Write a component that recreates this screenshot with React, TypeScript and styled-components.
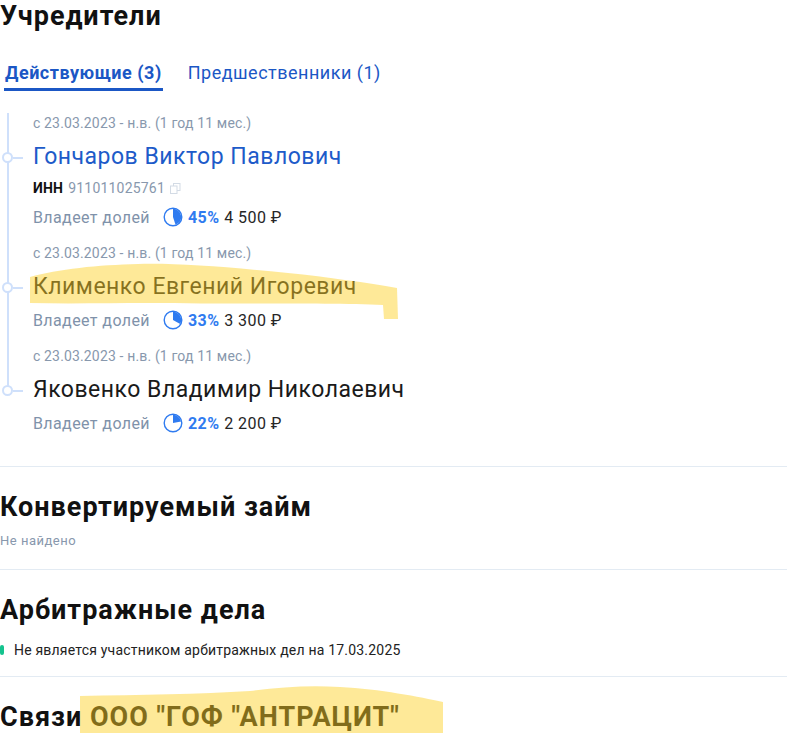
import styled, { createGlobalStyle } from "styled-components";

const GlobalStyle = createGlobalStyle`
  html, body {
    margin: 0;
    padding: 0;
    background: #fff;
  }
  body {
    font-family: Roboto, "Noto Sans", Arial, sans-serif;
    color: #1f1f1f;
  }
`;

const Page = styled.main`
  width: 787px;
  height: 736px;
  overflow: hidden;
  display: flex;
  flex-direction: column;
`;

const Section = styled.section<{ $first?: boolean; $bottom?: number }>`
  display: flex;
  flex-direction: column;
  padding: ${(p) => (p.$first ? "0 0 28px" : `24px 0 ${p.$bottom ?? 20}px`)};
  border-top: ${(p) => (p.$first ? "none" : "1px solid #e3ebf3")};
`;

const Heading = styled.h2`
  position: relative;
  margin: 0;
  font-size: 27px;
  line-height: 32px;
  font-weight: 700;
  color: #111;
  letter-spacing: 1px;
`;

const Tabs = styled.nav`
  display: flex;
  gap: 24px;
  margin-top: 30px;
  padding-left: 4px;
`;

const Tab = styled.span<{ $active?: boolean }>`
  font-size: 18px;
  line-height: 22px;
  letter-spacing: 0.5px;
  padding: 0 1px 4px;
  color: #1b57c5;
  font-weight: ${(p) => (p.$active ? 700 : 400)};
  border-bottom: 3px solid ${(p) => (p.$active ? "#1b57c5" : "transparent")};
`;

const Timeline = styled.div`
  position: relative;
  display: flex;
  flex-direction: column;
  gap: 12px;
  margin-top: 23px;
  padding-left: 33px;

  &::before {
    content: "";
    position: absolute;
    left: 7px;
    top: -1px;
    bottom: 48px;
    width: 2px;
    background: #cfe0fb;
  }
`;

const Item = styled.div`
  display: flex;
  flex-direction: column;
`;

const Period = styled.div`
  font-size: 14px;
  line-height: 18px;
  letter-spacing: 0.15px;
  color: #8898ad;
`;

const Name = styled.div<{ $link?: boolean }>`
  position: relative;
  margin-top: 9px;
  font-size: 23px;
  line-height: 32px;
  letter-spacing: 0.5px;
  color: ${(p) => (p.$link ? "#1d5bc9" : "#1a1a1a")};

  &::before {
    content: "";
    position: absolute;
    left: -31px;
    top: 11px;
    width: 7px;
    height: 7px;
    border: 2px solid #cfe0fb;
    border-radius: 50%;
    background: #fff;
  }

  &::after {
    content: "";
    position: absolute;
    left: -20px;
    top: 16px;
    width: 10px;
    height: 1.5px;
    background: #cfe0fb;
  }
`;

const InnRow = styled.div`
  display: flex;
  align-items: center;
  gap: 5px;
  margin-top: 3px;
  height: 24px;
  font-size: 14px;
  letter-spacing: 0.2px;
`;

const InnLabel = styled.b`
  color: #111;
  font-weight: 700;
`;

const InnValue = styled.span`
  color: #8898ad;
`;

const ShareRow = styled.div`
  display: flex;
  align-items: center;
  margin-top: 2px;
  height: 30px;
  font-size: 16px;
  letter-spacing: 0.4px;
`;

const ShareLabel = styled.span`
  color: #7f92aa;
  margin-right: 13px;
`;

const Percent = styled.b`
  color: #2f7bf0;
  font-weight: 700;
  margin: 0 5px;
`;

const Amount = styled.span`
  color: #262626;
`;

const Muted = styled.div`
  margin-top: 10px;
  font-size: 13px;
  line-height: 16px;
  letter-spacing: 0.5px;
  color: #8898ad;
`;

const Status = styled.div`
  display: flex;
  align-items: center;
  gap: 10px;
  margin-top: 16px;
  font-size: 14px;
  line-height: 16px;
  letter-spacing: 0.2px;
  color: #222;

  &::before {
    content: "";
    width: 4px;
    height: 10px;
    border-radius: 2px;
    background: #14c38e;
  }
`;

const Marker = styled.svg`
  position: absolute;
  pointer-events: none;
`;

const markFill = "rgba(252, 210, 40, 0.48)";

const Pie = ({ pct }: { pct: number }) => {
  const a = (pct / 100) * Math.PI * 2;
  const r = 8.2;
  const x = 10 + r * Math.sin(a);
  const y = 10 - r * Math.cos(a);
  const large = pct > 50 ? 1 : 0;
  return (
    <svg width="20" height="20" viewBox="0 0 20 20">
      <circle cx="10" cy="10" r="8.8" fill="none" stroke="#2f7bf0" strokeWidth="1.4" />
      <path d={`M10 10 L10 ${10 - r} A${r} ${r} 0 ${large} 1 ${x} ${y} Z`} fill="#2f7bf0" />
    </svg>
  );
};

const CopyIcon = () => (
  <svg width="11" height="11" viewBox="0 0 11 11">
    <rect x="3.5" y="0.5" width="6.5" height="7" fill="none" stroke="#d3dbe5" />
    <rect x="0.5" y="3" width="6.5" height="7.5" fill="#fff" stroke="#d3dbe5" />
  </svg>
);

const founders = [
  { name: "Гончаров Виктор Павлович", inn: "911011025761", pct: 45, amount: "4 500 ₽", link: true },
  { name: "Клименко Евгений Игоревич", pct: 33, amount: "3 300 ₽", marked: true },
  { name: "Яковенко Владимир Николаевич", pct: 22, amount: "2 200 ₽" },
];

function App() {
  return (
    <>
      <GlobalStyle />
      <Page>
        <Section $first>
          <Heading>Учредители</Heading>
          <Tabs>
            <Tab $active>Действующие (3)</Tab>
            <Tab>Предшественники (1)</Tab>
          </Tabs>
          <Timeline>
            {founders.map((f) => (
              <Item key={f.name}>
                <Period>с 23.03.2023 - н.в. (1 год 11 мес.)</Period>
                <Name $link={f.link}>
                  {f.name}
                  {f.marked ? (
                    <Marker width="372" height="60" viewBox="0 0 372 60" style={{ left: -5, top: -10 }}>
                      <path
                        d="M2 16 C30 8 70 4 110 3 C150 2 200 6 260 12 C300 16 340 22 369 27 L370 58 L356 58 L355 44 C300 42 200 43 120 42 C80 42 40 43 2 42 Z"
                        fill={markFill}
                      />
                    </Marker>
                  ) : null}
                </Name>
                {f.inn ? (
                  <InnRow>
                    <InnLabel>ИНН</InnLabel>
                    <InnValue>{f.inn}</InnValue>
                    <CopyIcon />
                  </InnRow>
                ) : null}
                <ShareRow>
                  <ShareLabel>Владеет долей</ShareLabel>
                  <Pie pct={f.pct} />
                  <Percent>{f.pct}%</Percent>
                  <Amount>{f.amount}</Amount>
                </ShareRow>
              </Item>
            ))}
          </Timeline>
        </Section>

        <Section>
          <Heading>Конвертируемый займ</Heading>
          <Muted>Не найдено</Muted>
        </Section>

        <Section $bottom={18}>
          <Heading>Арбитражные дела</Heading>
          <Status>Не является участником арбитражных дел на 17.03.2025</Status>
        </Section>

        <Section>
          <Heading>
            Связи ООО "ГОФ "АНТРАЦИТ"
            <Marker width="364" height="50" viewBox="0 0 364 50" style={{ left: 80, top: -16 }}>
              <path
                d="M0 11 C60 10 120 9 170 6 C200 2 230 0 260 2 C300 4 340 12 363 17 L363 48 L0 48 Z"
                fill={markFill}
              />
            </Marker>
          </Heading>
        </Section>
      </Page>
    </>
  );
}

export default App;
